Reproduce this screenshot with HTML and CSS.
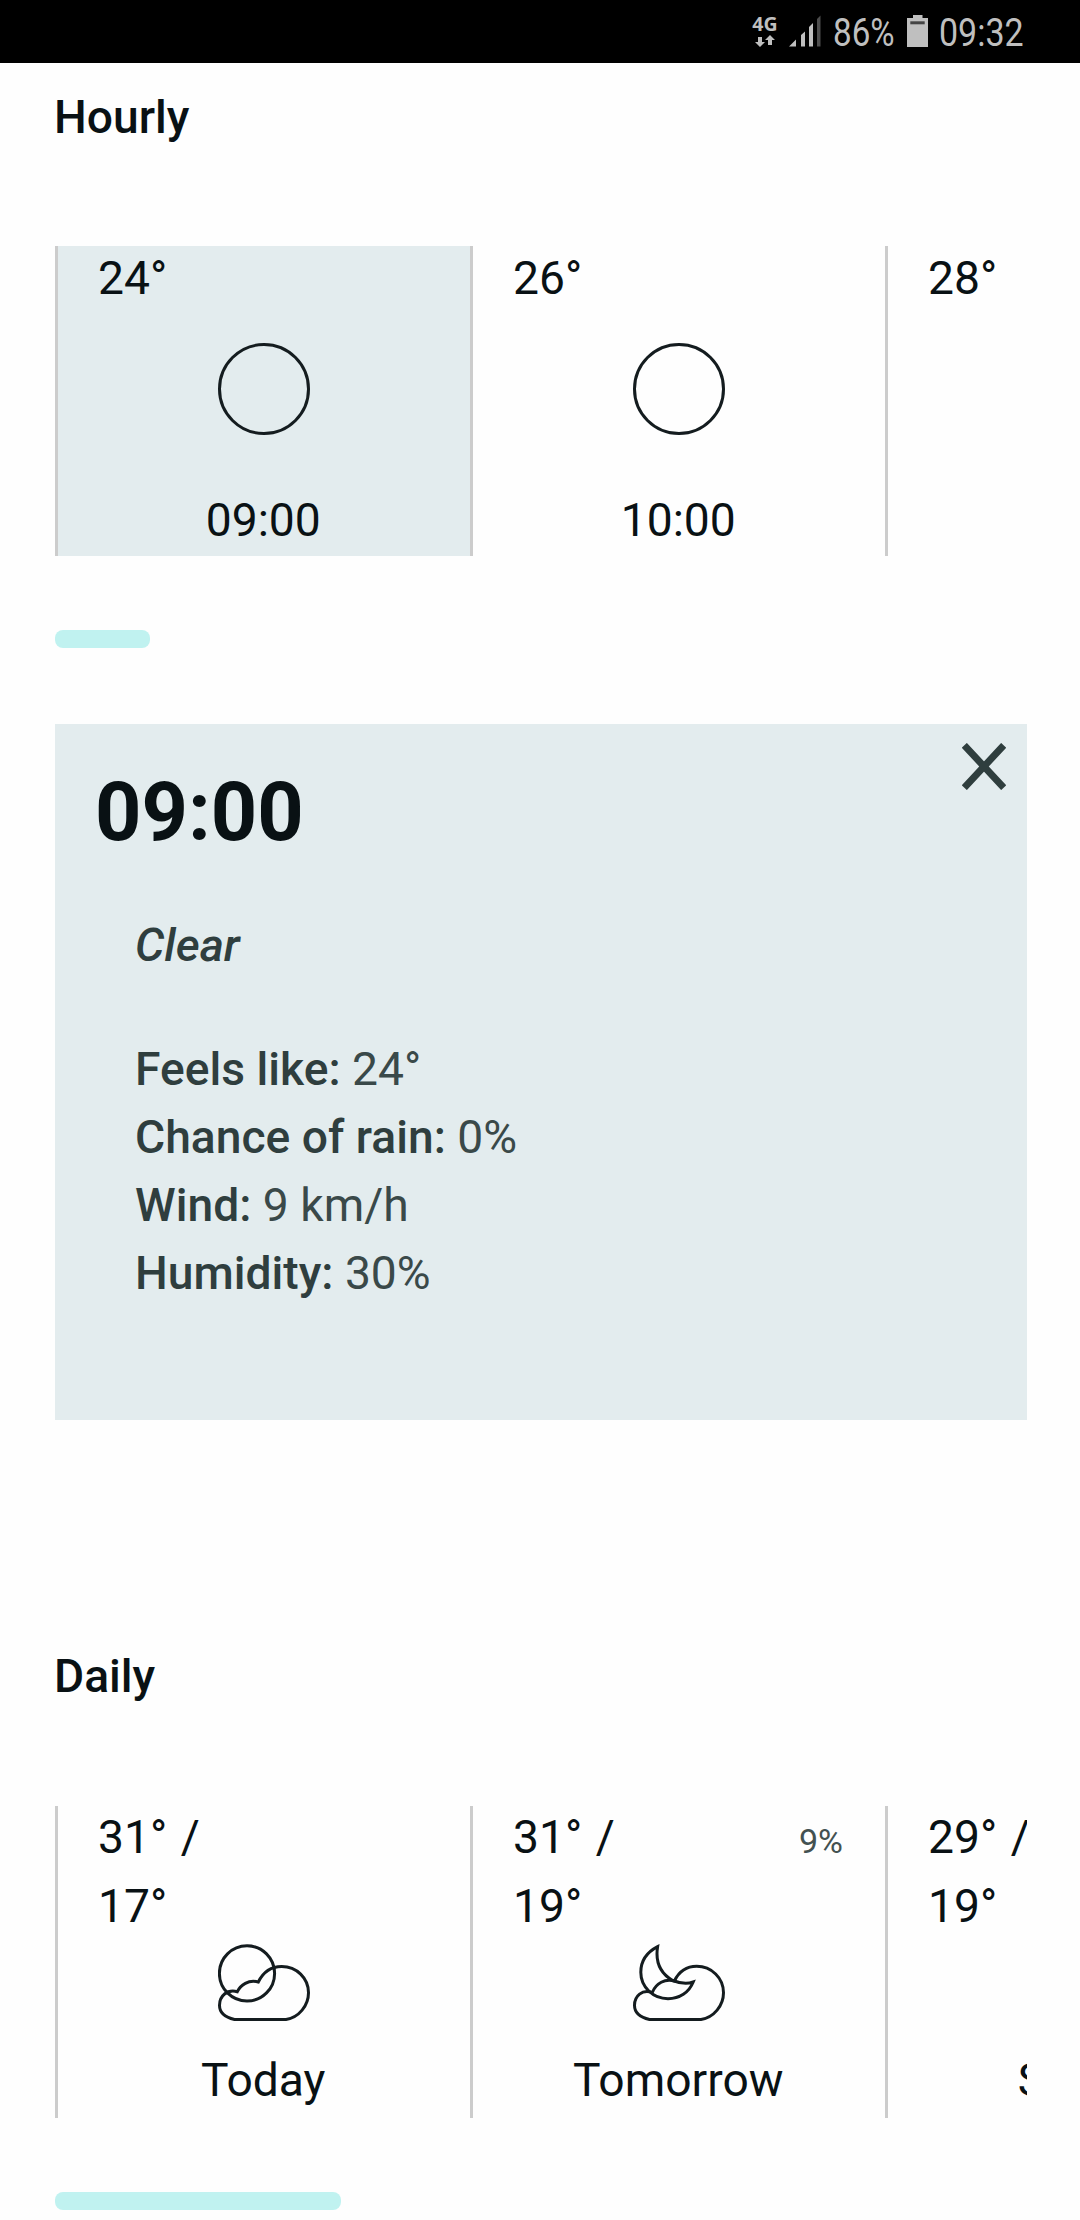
FILE: index.html
```html
<!DOCTYPE html>
<html lang="en">
<head>
<meta charset="utf-8">
<title>Weather</title>
<link rel="stylesheet" href="styles.css">
</head>
<body>
<header class="status">
  <div class="network">
    <span class="network-type">4G</span>
    <svg class="arrows" viewBox="0 0 20 12" width="20" height="12"><path d="M3 2h4v5h3L5 12 0 7h3zM13 10h4V5h3l-5-5-5 5h3z"/></svg>
  </div>
  <svg class="signal" viewBox="0 0 32 32" width="32" height="32"><path d="M0 31.500 7 24.500v7zM12 20l4-3.500v15h-4zM20 12l4-4v23.500h-4z"/><path class="off" d="M28 4l3.500-3.500v31H28z"/></svg>
  <span class="percent"><span class="condensed">86%</span></span>
  <svg class="battery" viewBox="0 0 21 32" width="21" height="32"><path d="M6 0h9.500v3H21v29H0V3h6z"/><path class="level" d="M3.300 6.300h14.400v3H3.300z"/></svg>
  <span class="clock"><span class="condensed">09:32</span></span>
</header>
<main class="page">
  <section class="hourly">
    <h2 class="heading">Hourly</h2>
    <div class="strip">
      <article class="card selected">
        <div class="top"><span class="temp">24°</span></div>
        <svg class="icon" viewBox="0 0 92 92" width="92" height="92"><circle cx="46" cy="46" r="44.500"/></svg>
        <span class="label">09:00</span>
      </article>
      <article class="card">
        <div class="top"><span class="temp">26°</span></div>
        <svg class="icon" viewBox="0 0 92 92" width="92" height="92"><circle cx="46" cy="46" r="44.500"/></svg>
        <span class="label">10:00</span>
      </article>
      <article class="card">
        <div class="top"><span class="temp">28°</span></div>
      </article>
    </div>
    <div class="scroll"><div class="thumb" style="width: 95px"></div></div>
  </section>
  <section class="detail">
    <div class="detail-head">
      <h1 class="time">09:00</h1>
      <svg class="close" viewBox="0 0 44 47" width="44" height="47"><path d="M2.300 2.300 41.700 44.700M41.700 2.300 2.300 44.700"/></svg>
    </div>
    <p class="summary">Clear</p>
    <ul class="facts">
      <li><b>Feels like:</b> 24°</li>
      <li><b>Chance of rain:</b> 0%</li>
      <li><b>Wind:</b> 9 km/h</li>
      <li><b>Humidity:</b> 30%</li>
    </ul>
  </section>
  <section class="daily">
    <h2 class="heading">Daily</h2>
    <div class="strip">
      <article class="card">
        <div class="top"><span class="temp">31° /<br>17°</span></div>
        <svg class="icon" viewBox="0 0 92 78" width="92" height="78"><circle cx="29" cy="29.400" r="27.600"/><path d="M16.500 75.500C7.500 73.500 1.500 68.500 1.500 61.300C1.500 52 9 45 19.300 47.700C22.500 41 30.500 35.300 40.300 38C45 28.500 53 22.500 63.700 22.500C78.500 22.500 90.500 34 90.500 48.800C90.500 61.500 81 73.500 68 75.500Z"/></svg>
        <span class="label">Today</span>
      </article>
      <article class="card">
        <div class="top"><span class="temp">31° /<br>19°</span><span class="rain">9%</span></div>
        <svg class="icon" viewBox="0 0 92 78" width="92" height="78"><path d="M24.600 2.700C12.500 9 7.800 18 7.800 28.300C7.800 43 20 54.700 35 54.700C46.500 54.700 56 48.500 60.200 38C54 40.300 46 39 39.700 36.500C28.500 30 22 19 24.600 2.700Z"/><path d="M16.500 75.500C7.500 73.500 1.500 68.500 1.500 61.300C1.500 52 9 45 19.300 48.500C23 39 32 34.500 41.400 37C46 27.500 54 22.300 63.700 22.300C78.500 22.300 90.500 34 90.500 48.800C90.500 61.500 81 73.500 68 75.500Z"/></svg>
        <span class="label">Tomorrow</span>
      </article>
      <article class="card">
        <div class="top"><span class="temp">29° /<br>19°</span></div>
        <span class="label">Sunday</span>
      </article>
    </div>
    <div class="scroll"><div class="thumb" style="width: 286px"></div></div>
  </section>
</main>
</body>
</html>
```
FILE: styles.css
```css
* { box-sizing: border-box; }
body {
  margin: 0;
  height: 2220px;
  overflow: hidden;
  background: #fefefe;
  color: #091114;
  font-family: Roboto, sans-serif;
  font-size: 46.2px;
  line-height: 69px;
}
h1, h2, p, ul { margin: 0; padding: 0; }
svg { display: block; flex: none; }

.status {
  display: flex;
  align-items: flex-start;
  justify-content: flex-end;
  height: 63px;
  padding: 14.500px 57px 0 0;
  background: #000;
  color: #bfbfbf;
  fill: #bfbfbf;
}
.network { display: flex; flex-direction: column; align-items: center; width: 26px; margin-right: 11px; }
.network-type { font: 700 19.500px/18px "Open Sans", sans-serif; margin-bottom: 2px; }
.signal { margin-right: 12px; }
.signal .off { fill: #4d4d4d; }
.percent, .clock { font-size: 39.500px; line-height: 35px; white-space: nowrap; }
.percent { width: 62px; margin-right: 12px; }
.clock { width: 84px; margin-left: 11px; }
.condensed { display: inline-block; transform: scaleX(.86); transform-origin: left; }
.percent .condensed { transform: scaleX(.84); }
.battery .level { fill: #444; }

.page { padding: 20px 53px 0 55px; }
.heading { margin-bottom: 94px; margin-left: -1px; font-size: inherit; font-weight: 500; }
.strip { display: flex; overflow: hidden; }
.hourly .strip { height: 310px; }
.daily .strip { height: 312px; }
.card {
  display: flex;
  flex: none;
  flex-direction: column;
  align-items: center;
  width: 415px;
  border-left: 3px solid #ccc;
}
.selected { background: #e3ecee; }
.top {
  display: flex;
  justify-content: space-between;
  align-self: stretch;
  margin-top: -3px;
  padding: 0 42px 0 40px;
}
.hourly .top { margin-top: -2px; }
.temp { word-spacing: 2px; }
.rain { padding-top: 4px; font-size: 34px; color: #435151; }
.icon { fill: none; stroke: #141c1f; stroke-width: 3; }
.hourly .icon { margin-top: 30px; }
.daily .icon { margin-top: 3px; }
.label { margin-top: auto; padding-right: 1.500px; white-space: nowrap; }
.hourly .label { margin-bottom: 1px; }
.daily .label { margin-bottom: 3px; }
.scroll { padding-top: 74px; }
.thumb { height: 18px; border-radius: 8px; background: #c0f2f0; }

.detail {
  height: 696px;
  margin-top: 76px;
  padding: 19px 21.500px 0 40px;
  background: #e3ecee;
  color: #2f3e3e;
}
.detail-head { display: flex; justify-content: space-between; }
.time { padding-top: 10px; color: #091114; font-size: 81px; font-weight: 700; line-height: 120px; }
.close { fill: none; stroke: #2f3e3e; stroke-width: 7; }
.summary { margin: 38px 0 0 40px; font-size: 46.200px; font-style: italic; font-weight: 500; line-height: 68px; }
.facts { margin: 56px 0 0 40px; list-style: none; font-size: 46.200px; line-height: 68px; color: #3a4949; }
.facts b { font-weight: 500; color: #2f3e3e; }
.daily { padding-top: 222px; }
.daily .heading { margin-bottom: 95px; }
```
